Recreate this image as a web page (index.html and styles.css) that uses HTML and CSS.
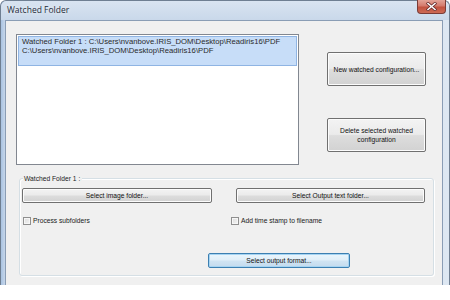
FILE: index.html
```html
<!DOCTYPE html>
<html>

<head lang="en">
    <meta charset="UTF-8">
    <title>Watched Folder</title>
    <link rel="stylesheet" href="styles.css">
</head>

<body>

    <div class="window">
        <div class="titlebar">
            <span class="title">Watched Folder</span>
            <a class="close-btn" href="javascript:void(0);">
                <svg width="11" height="9" viewBox="0 0 11 9">
                    <path d="M2 1.5 L9 7.5 M9 1.5 L2 7.5" stroke="#6b3030" stroke-width="3" stroke-linecap="square"/>
                    <path d="M2 1.5 L9 7.5 M9 1.5 L2 7.5" stroke="#ffffff" stroke-width="1.5" stroke-linecap="square"/>
                </svg>
            </a>
        </div>

        <div class="client">
            <div class="top-row">
                <div class="list-box">
                    <div class="list-item selected">
                        Watched Folder 1 : C:\Users\nvanbove.IRIS_DOM\Desktop\Readiris16\PDF<br>
                        C:\Users\nvanbove.IRIS_DOM\Desktop\Readiris16\PDF
                    </div>
                </div>
                <div class="side-buttons">
                    <a class="btn btn-tall" href="javascript:void(0);">New watched configuration...</a>
                    <a class="btn btn-tall" href="javascript:void(0);">Delete selected watched<br>configuration</a>
                </div>
            </div>

            <div class="group-box">
                <span class="group-label">Watched Folder 1 :</span>
                <div class="group-row">
                    <a class="btn btn-image" href="javascript:void(0);">Select image folder...</a>
                    <a class="btn btn-output" href="javascript:void(0);">Select Output text folder...</a>
                </div>
                <div class="check-row">
                    <label class="check check-first"><span class="box"></span>Process subfolders</label>
                    <label class="check"><span class="box"></span>Add time stamp to filename</label>
                </div>
                <div class="format-row">
                    <a class="btn btn-format focused" href="javascript:void(0);">Select output format...</a>
                </div>
            </div>
        </div>
    </div>

</body>

</html>
```

FILE: styles.css
```css
html,
body,
div,
span,
a,
label {
    padding: 0px;
    margin: 0px;
}

body {
    background: #ffffff;
    font-family: "Liberation Sans", Arial, sans-serif;
}

a {
    text-decoration: none;
    color: #000000;
}

.window {
    width: 450px;
    height: 285px;
    box-sizing: border-box;
    border: #6f7f92 solid 1px;
    border-bottom: none;
    border-radius: 6px 6px 0px 0px;
    background: linear-gradient(90deg, #a9c3e2 0px, #c6d6ea 4px, #d4e0ee 40%, #dde7f2 100%);
    display: flex;
    flex-direction: column;
}

.titlebar {
    height: 19px;
    display: flex;
    justify-content: space-between;
    align-items: flex-start;
    background: linear-gradient(180deg, #d9e4f1 0px, #c9d8ea 100%);
    border-radius: 6px 6px 0px 0px;
}

.title {
    font-family: "Open Sans", "Liberation Sans", sans-serif;
    font-size: 8.5px;
    color: #1e2b3a;
    line-height: 10px;
    margin: 4px 0px 0px 6px;
    text-shadow: 0px 0px 4px #ffffff;
}

.close-btn {
    width: 29px;
    height: 14px;
    box-sizing: border-box;
    margin: -1px 3px 0px 0px;
    border: #7a3b36 solid 1px;
    border-top: none;
    border-radius: 0px 0px 4px 4px;
    background: linear-gradient(180deg, #e3a397 0px, #d47a6c 45%, #c2523f 55%, #cc6a55 100%);
    display: flex;
    align-items: center;
    justify-content: center;
}

.client {
    flex: 1;
    margin: 0px 6px 0px 4px;
    border: #8a9db5 solid 1px;
    border-bottom: none;
    background: #f0f0f0;
    padding: 13px 0px 0px 10px;
    font-size: 6.7px;
    color: #000000;
}

.top-row {
    display: flex;
    gap: 28px;
}

.list-box {
    width: 283px;
    height: 131px;
    box-sizing: border-box;
    border: #828790 solid 1px;
    background: #ffffff;
    padding: 1px;
}

.list-item {
    height: 30px;
    box-sizing: border-box;
    padding: 0px 0px 0px 3px;
    font-size: 7.7px;
    line-height: 9px;
    color: #2a2a2a;
}

.list-item.selected {
    background: #c7ddf8;
    border: #8fb4e3 solid 1px;
}

.side-buttons {
    display: flex;
    flex-direction: column;
    gap: 32px;
    padding-top: 18px;
}

.btn {
    display: flex;
    align-items: center;
    justify-content: center;
    text-align: center;
    box-sizing: border-box;
    border: #707070 solid 1px;
    border-radius: 2px;
    background: linear-gradient(180deg, #f3f3f3 0%, #ebebeb 48%, #dddddd 52%, #d2d2d2 100%);
    box-shadow: inset 0px 0px 0px 1px #fcfcfc;
    line-height: 9px;
    color: #111111;
}

.btn-tall {
    width: 99px;
    height: 34px;
}

.group-box {
    position: relative;
    width: 415px;
    height: 98px;
    box-sizing: border-box;
    margin: 13px 0px 0px 3px;
    border: #d5dfe5 solid 1px;
    border-radius: 3px;
    box-shadow: inset 1px 1px 0px #ffffff, 1px 1px 0px #ffffff;
    padding: 9px 0px 0px 2px;
}

.group-label {
    position: absolute;
    left: 3px;
    top: -5px;
    padding: 0px 2px 0px 1px;
    background: #f0f0f0;
    line-height: 9px;
    color: #222222;
}

.group-row {
    display: flex;
    gap: 24px;
}

.btn-image {
    width: 190px;
    height: 15px;
}

.btn-output {
    width: 189px;
    height: 15px;
}

.check-row {
    display: flex;
    margin-top: 13px;
    padding-left: 1px;
}

.check {
    display: flex;
    align-items: center;
    line-height: 9px;
    color: #1a1a1a;
}

.check-first {
    width: 208px;
}

.box {
    width: 8px;
    height: 8px;
    box-sizing: border-box;
    border: #8f8f8f solid 1px;
    background: linear-gradient(135deg, #dcdcdc 0%, #f4f4f4 100%);
    box-shadow: inset 0px 0px 0px 1px #f6f6f6;
    margin-right: 2px;
}

.format-row {
    margin-top: 28px;
    padding-left: 186px;
}

.btn-format {
    width: 142px;
    height: 15px;
}

.btn.focused {
    border-color: #3c7fb1;
    box-shadow: inset 0px 0px 0px 1px #a6d4f2;
    background: linear-gradient(180deg, #eaf6fd 0%, #e0eef8 48%, #d0e4f3 52%, #c4dbee 100%);
}
```
